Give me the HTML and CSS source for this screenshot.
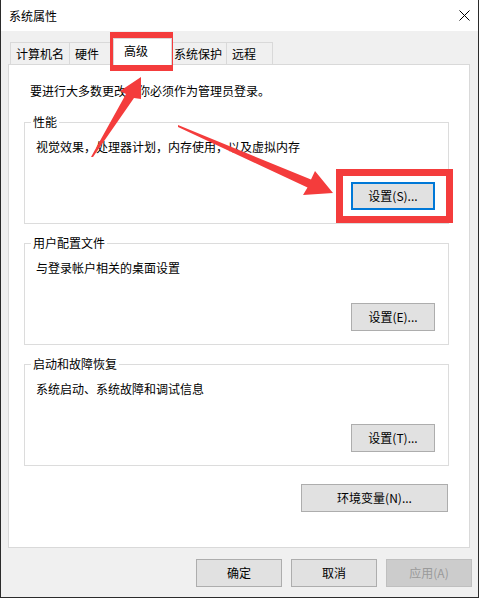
FILE: index.html
```html
<!DOCTYPE html>
<html lang="zh-CN">
<head>
<meta charset="utf-8">
<title>系统属性</title>
<link rel="stylesheet" href="styles.css">
</head>
<body>
<div class="window">
  <div class="titlebar">
    <span class="title">系统属性</span>
    <svg class="close" width="11" height="11" viewBox="0 0 11 11"><path d="M0.5 0.5L10.5 10.5M10.5 0.5L0.5 10.5" stroke="#000" stroke-width="1"/></svg>
  </div>
  <div class="tabs">
    <div class="tab t1">计算机名</div>
    <div class="tab t2">硬件</div>
    <div class="tab t3 active">高级</div>
    <div class="tab t4">系统保护</div>
    <div class="tab t5">远程</div>
  </div>
  <div class="panel">
    <p class="note">要进行大多数更改，你必须作为管理员登录。</p>
    <fieldset class="group">
      <legend>性能</legend>
      <p class="desc">视觉效果，处理器计划，内存使用，以及虚拟内存</p>
      <div class="row"><button class="btn default">设置(S)...</button></div>
    </fieldset>
    <fieldset class="group">
      <legend>用户配置文件</legend>
      <p class="desc">与登录帐户相关的桌面设置</p>
      <div class="row"><button class="btn">设置(E)...</button></div>
    </fieldset>
    <fieldset class="group">
      <legend>启动和故障恢复</legend>
      <p class="desc">系统启动、系统故障和调试信息</p>
      <div class="row"><button class="btn">设置(T)...</button></div>
    </fieldset>
    <div class="row env"><button class="btn wide">环境变量(N)...</button></div>
  </div>
  <div class="footer">
    <button class="btn foot">确定</button>
    <button class="btn foot">取消</button>
    <button class="btn foot disabled">应用(A)</button>
  </div>
</div>
<svg class="annot" width="479" height="598" viewBox="0 0 479 598">
  <rect x="113" y="35" width="57" height="33" fill="none" stroke="#f43c3c" stroke-width="6"/>
  <rect x="339.5" y="172.5" width="110" height="47" fill="none" stroke="#f43c3c" stroke-width="7"/>
  <polygon fill="#f43c3c" points="91,157 126,94 120,91 141,77 141,99 134,98 93,157"/>
  <polygon fill="#f43c3c" points="178,125 311,179.5 315,171 333,193 303,195 307.5,187.5 178,127"/>
</svg>
</body>
</html>
```
FILE: styles.css
```css
* { box-sizing: border-box; }
html, body { margin: 0; padding: 0; background: #fff; }
body {
  position: relative;
  font-family: "Noto Sans CJK SC", "Microsoft YaHei", sans-serif;
  font-size: 12px;
  line-height: 16px;
  color: #000;
}
.window {
  width: 479px;
  height: 598px;
  border: 1px solid #2b2b2b;
  border-top: none;
  background: #f0f0f0;
  display: flex;
  flex-direction: column;
}
.titlebar {
  height: 31px;
  flex: none;
  background: #fff;
  display: flex;
  align-items: center;
  justify-content: space-between;
  padding: 0 8px 0 8px;
}
.close { display: block; }
.tabs {
  display: flex;
  align-items: flex-end;
  height: 26px;
  margin-top: 7px;
  padding-left: 9px;
  flex: none;
}
.tab {
  height: 22px;
  border: 1px solid #d9d9d9;
  border-bottom: none;
  background: #f0f0f0;
  display: flex;
  align-items: center;
  padding-left: 5px;
  white-space: nowrap;
}
.t1 { width: 60px; }
.t2 { width: 47px; margin-left: -1px; }
.t3 { width: 59px; margin-left: -3px; }
.t4 { width: 58px; margin-left: -3px; padding-left: 4px; }
.t5 { width: 47px; margin-left: -1px; }
.tab.active {
  height: 27px;
  margin-bottom: -1px;
  background: #fff;
  position: relative;
  z-index: 1;
  padding-left: 10px;
  padding-bottom: 3px;
}
.t4 { position: relative; z-index: 0; }
.panel {
  height: 484px;
  margin: 0 8px 0 7px;
  background: #fff;
  border: 1px solid #d9d9d9;
  padding-top: 18px;
  flex: none;
}
.note { margin: 0 0 0 21px; }
.group {
  margin: 15px 20px 0 15px;
  padding: 0 13px 13px 11px;
  border: 1px solid #dcdcdc;
  min-width: 0;
}
.group + .group { margin-top: 11px; }
.group legend {
  padding: 0 2px;
  margin-left: -5px;
  line-height: 16px;
}
.desc { margin: 9px 0 0 0; }
.row { display: flex; justify-content: flex-end; margin-top: 27px; }
.row.env { margin: 18px 21px 0 0; }
.btn {
  width: 84px;
  height: 28px;
  padding: 0;
  background: #e1e1e1;
  border: 1px solid #adadad;
  font-family: inherit;
  font-size: 12px;
  color: #000;
  line-height: 16px;
}
.btn.default { border: 2px solid #0078d7; }
.btn.wide { width: 147px; }
.footer {
  display: flex;
  justify-content: flex-end;
  gap: 9px;
  margin-top: 11px;
  padding-right: 6px;
}
.btn.foot { width: 86px; }
.btn.disabled { background: #cccccc; border-color: #bfbfbf; color: #9a9a9a; }
.annot { position: absolute; left: 0; top: 0; pointer-events: none; }
```
